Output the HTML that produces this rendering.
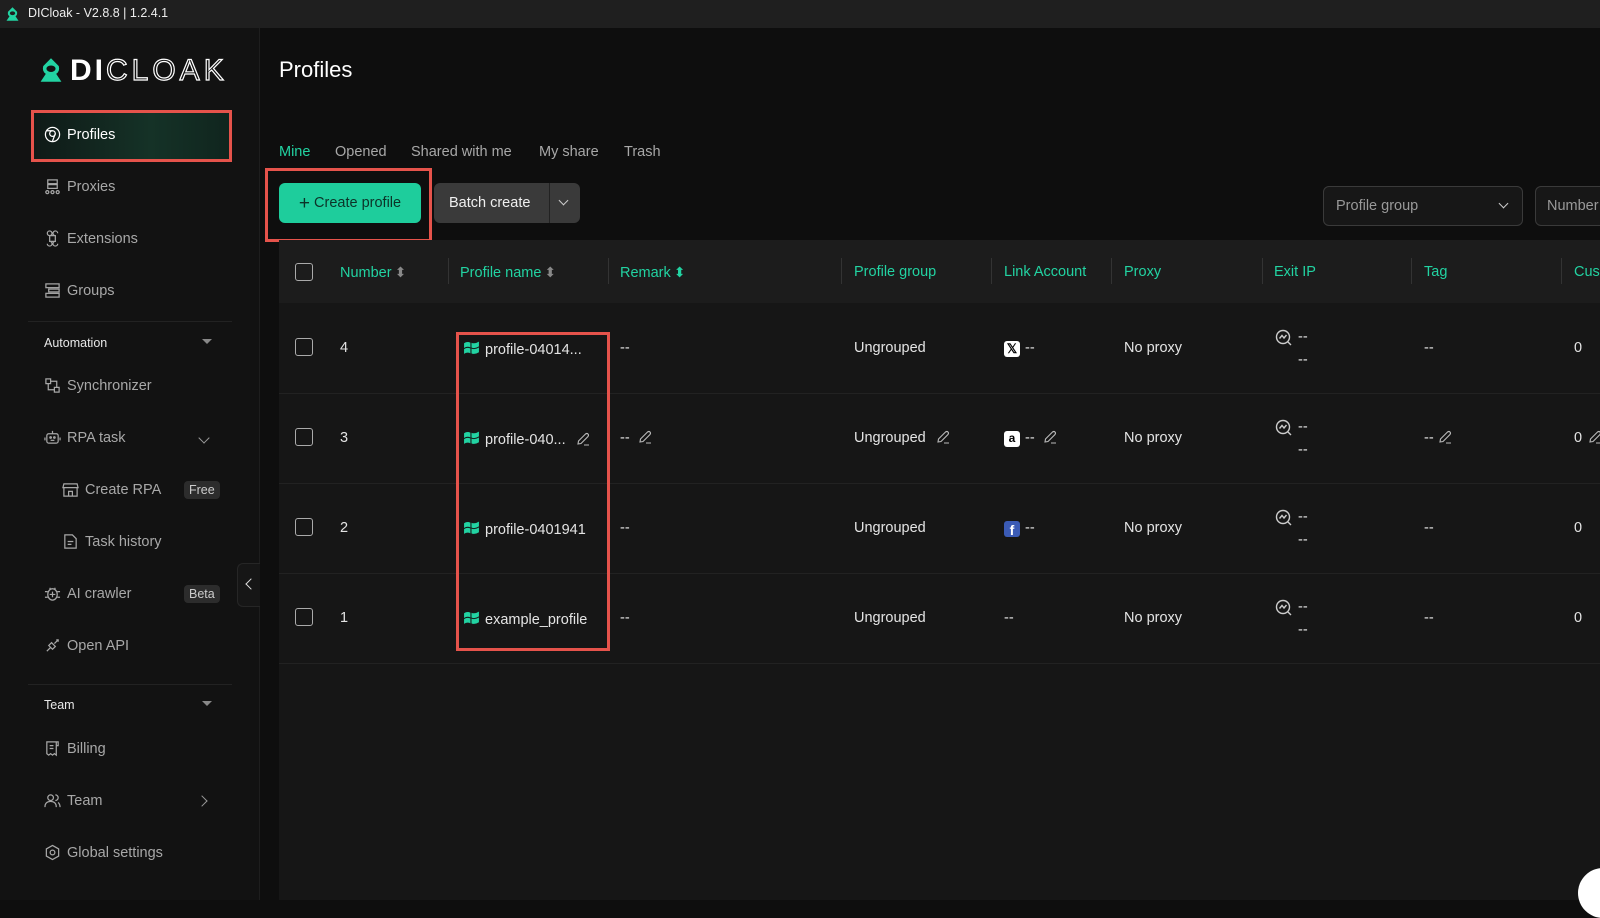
<!DOCTYPE html>
<html><head><meta charset="utf-8"><style>
*{box-sizing:border-box;margin:0;padding:0}
body{width:1600px;height:900px;background:#0e0e0e;font-family:"Liberation Sans",sans-serif;color:#ddd;position:relative;overflow:hidden;font-size:14px}
.a{position:absolute;white-space:nowrap}
.g{color:#22d3a2}
.nav{position:absolute;left:44px;color:#a8a8a8;font-size:14.5px;display:flex;align-items:center;gap:6px;white-space:nowrap}
.nav svg{width:17px;height:17px;stroke:#a8a8a8;fill:none;stroke-width:1.3}
.hd{position:absolute;top:264px;color:#22d3a2;font-size:14.5px;white-space:nowrap}
.so{color:#888;font-size:14px;margin-left:3px}
.dv{position:absolute;top:258px;width:1px;height:26px;background:#333}
.cb{position:absolute;left:295px;width:18px;height:18px;border:1.3px solid #aaa;border-radius:3px}
.rl{position:absolute;left:279px;width:1321px;height:1px;background:#222}
.c{position:absolute;font-size:14.5px;color:#e4e4e4;white-space:nowrap}
.pen{display:inline-block;width:14px;height:14px;vertical-align:-2px;margin-left:10px}
.win{display:inline-block;width:17px;height:16px;vertical-align:-2px;margin-right:5px}
.badge{position:absolute;left:184px;background:#2c2c2c;color:#ccc;font-size:12.5px;padding:2px 5px;border-radius:4px}
</style></head><body>
<div class="a" style="left:0;top:0;width:1600px;height:28px;background:#1f1f1f"></div>
<svg class="a" style="left:5px;top:6px" width="15" height="16" viewBox="0 0 20 20"><path d="M10 1 L16 7 Q17 11 14 13 L18 19 H2 L6 13 Q3 11 4 7 Z" fill="#22d3a2"/><ellipse cx="10" cy="9" rx="3.5" ry="2.5" fill="#1f1f1f"/></svg>
<div class="a" style="left:28px;top:6px;font-size:12.5px;color:#eee">DICloak - V2.8.8 | 1.2.4.1</div>
<div class="a" style="left:0;top:28px;width:260px;height:872px;background:#121212;border-right:1px solid #1e1e1e"></div>
<svg class="a" style="left:38px;top:57px" width="26" height="26" viewBox="0 0 20 20"><path d="M10 1 L16 7 Q17 11 14 13 L18 19 H2 L6 13 Q3 11 4 7 Z" fill="#22d3a2"/><ellipse cx="10" cy="9" rx="3.5" ry="2.5" fill="#121212"/></svg>
<div class="a" style="left:70px;top:54px;font-size:30px;font-weight:bold;color:#fff;letter-spacing:3px">DI<span style="font-weight:normal;-webkit-text-stroke:1.2px #fff;color:transparent;letter-spacing:4px">CLOAK</span></div>
<div class="a" style="left:31px;top:110px;width:201px;height:52px;border:3px solid #e5534b;background:linear-gradient(90deg,#0f1a17,#153227 60%,#10251e)"></div>
<div class="nav" style="top:126px;color:#fff"><svg viewBox="0 0 18 18" style="stroke:#fff"><circle cx="9" cy="9" r="7.5"/><circle cx="9" cy="8" r="3"/><path d="M12 8 L9 16 M3 5 H9"/></svg>Profiles</div>
<div class="nav" style="top:178px"><svg viewBox="0 0 18 18"><rect x="4" y="2" width="10" height="4"/><rect x="4" y="7" width="10" height="4"/><circle cx="3.5" cy="15" r="1.6"/><circle cx="9" cy="15" r="1.6"/><circle cx="14.5" cy="15" r="1.6"/></svg>Proxies</div>
<div class="nav" style="top:230px"><svg viewBox="0 0 18 18"><path d="M6 6 H12 V12 H6 Z M6 6 A2.5 2.5 0 1 0 3.5 3.5 A2.5 2.5 0 0 0 6 6 M12 6 A2.5 2.5 0 1 1 14.5 3.5 M6 12 A2.5 2.5 0 1 1 3.5 14.5 M12 12 A2.5 2.5 0 1 0 14.5 14.5"/></svg>Extensions</div>
<div class="nav" style="top:282px"><svg viewBox="0 0 18 18"><rect x="2" y="2" width="14" height="4"/><rect x="5" y="7.5" width="11" height="3"/><rect x="2" y="12" width="14" height="4"/></svg>Groups</div>
<div class="a" style="left:28px;top:321px;width:204px;height:1px;background:#222"></div>
<div class="a" style="left:44px;top:336px;font-size:12.5px;color:#e8e8e8">Automation</div>
<div class="a" style="left:202px;top:339px;border:5px solid transparent;border-top:5px solid #888"></div>
<div class="nav" style="top:377px"><svg viewBox="0 0 18 18"><rect x="2" y="2" width="5" height="5"/><rect x="11" y="11" width="5" height="5"/><path d="M4.5 7 V13.5 H11 M7 4.5 H13.5 V11"/></svg>Synchronizer</div>
<div class="nav" style="top:429px"><svg viewBox="0 0 18 18"><rect x="3" y="5" width="12" height="10" rx="2"/><path d="M9 2 V5 M1 9 V12 M17 9 V12"/><circle cx="7" cy="9" r=".8"/><circle cx="11" cy="9" r=".8"/><path d="M7 12 H11"/></svg>RPA task</div>
<div class="a" style="left:200px;top:434px;width:8px;height:8px;border-right:1.3px solid #999;border-bottom:1.3px solid #999;transform:rotate(45deg)"></div>
<div class="nav" style="top:481px;left:62px"><svg viewBox="0 0 18 18"><path d="M2 3 H16 L17 7 H1 Z M2 7 V16 H16 V7 M7 16 V11 H11 V16"/></svg>Create RPA</div>
<div class="badge" style="top:481px">Free</div>
<div class="nav" style="top:533px;left:62px"><svg viewBox="0 0 18 18"><path d="M3 2 H11 L15 6 V16 H3 Z M6 9 H12 M6 12 H10"/></svg>Task history</div>
<div class="nav" style="top:585px"><svg viewBox="0 0 18 18"><ellipse cx="9" cy="10" rx="5" ry="6"/><path d="M9 7 V13 M6 10 H12 M1 7 H4 M14 7 H17 M1 13 H4 M14 13 H17 M6 3 L7 4.5 M12 3 L11 4.5"/></svg>AI crawler</div>
<div class="badge" style="top:585px">Beta</div>
<div class="nav" style="top:637px"><svg viewBox="0 0 18 18"><path d="M3 15 L7 11 M5 9 L9 13 L12 10 L8 6 Z M11 7 L15 3 M13 3 H15 V5"/></svg>Open API</div>
<div class="a" style="left:28px;top:684px;width:204px;height:1px;background:#222"></div>
<div class="a" style="left:44px;top:698px;font-size:12.5px;color:#e8e8e8">Team</div>
<div class="a" style="left:202px;top:701px;border:5px solid transparent;border-top:5px solid #888"></div>
<div class="nav" style="top:740px"><svg viewBox="0 0 18 18"><path d="M3 2 H13 V16 L11 14.5 L9 16 L7 14.5 L5 16 L3 14.5 Z M13 2 H15 V6 H13 M6 6 H10 M6 9 H10"/></svg>Billing</div>
<div class="nav" style="top:792px"><svg viewBox="0 0 18 18"><circle cx="7" cy="6" r="3"/><path d="M1 16 Q1 10 7 10 Q13 10 13 16 M12 3 A3 3 0 0 1 12 9 M15 11 Q17 13 17 16"/></svg>Team</div>
<div class="a" style="left:198px;top:797px;width:8px;height:8px;border-right:1.3px solid #999;border-top:1.3px solid #999;transform:rotate(45deg)"></div>
<div class="nav" style="top:844px"><svg viewBox="0 0 18 18"><path d="M9 1.5 L15.5 5.2 V12.8 L9 16.5 L2.5 12.8 V5.2 Z"/><circle cx="9" cy="9" r="2.5"/></svg>Global settings</div>
<div class="a" style="left:237px;top:563px;width:23px;height:44px;background:#161616;border:1px solid #262626;border-right:none;border-radius:6px 0 0 6px"></div>
<div class="a" style="left:247px;top:580px;width:8px;height:8px;border-left:1.6px solid #ddd;border-bottom:1.6px solid #ddd;transform:rotate(45deg)"></div>
<div class="a" style="left:279px;top:57px;font-size:22px;color:#fff">Profiles</div>
<div class="a g" style="left:279px;top:144px;font-size:14.5px">Mine</div>
<div class="a" style="left:335px;top:144px;font-size:14.5px;color:#a8a8a8">Opened</div>
<div class="a" style="left:411px;top:144px;font-size:14.5px;color:#a8a8a8">Shared with me</div>
<div class="a" style="left:539px;top:144px;font-size:14.5px;color:#a8a8a8">My share</div>
<div class="a" style="left:624px;top:144px;font-size:14.5px;color:#a8a8a8">Trash</div>
<div class="a" style="left:265px;top:168px;width:167px;height:74px;border:3px solid #e5534b"></div>
<div class="a" style="left:279px;top:183px;width:142px;height:40px;background:#1ecd9c;border-radius:6px;color:#0c3328;font-size:14.5px;text-align:center;line-height:40px"><span style="font-size:19px;vertical-align:-2px">+</span> Create profile</div>
<div class="a" style="left:434px;top:183px;width:146px;height:40px;background:#3a3a3a;border-radius:6px"></div>
<div class="a" style="left:449px;top:195px;font-size:14.5px;color:#f0f0f0">Batch create</div>
<div class="a" style="left:549px;top:183px;width:1px;height:40px;background:#222"></div>
<div class="a" style="left:560px;top:197px;width:7px;height:7px;border-right:1.3px solid #ccc;border-bottom:1.3px solid #ccc;transform:rotate(45deg)"></div>
<div class="a" style="left:1323px;top:186px;width:200px;height:40px;border:1px solid #3a3a3a;background:#171717;border-radius:6px"></div>
<div class="a" style="left:1336px;top:198px;font-size:14.5px;color:#999">Profile group</div>
<div class="a" style="left:1500px;top:200px;width:7px;height:7px;border-right:1.3px solid #ccc;border-bottom:1.3px solid #ccc;transform:rotate(45deg)"></div>
<div class="a" style="left:1535px;top:186px;width:80px;height:40px;border:1px solid #3a3a3a;background:#171717;border-radius:6px"></div>
<div class="a" style="left:1547px;top:198px;font-size:14.5px;color:#999">Number</div>
<div class="a" style="left:279px;top:240px;width:1321px;height:660px;background:#161616"></div>
<div class="a" style="left:279px;top:240px;width:1321px;height:63px;background:#1c1c1c"></div>
<div class="cb" style="top:263px"></div>
<div class="hd" style="left:340px">Number<span class="so">⬍</span></div>
<div class="dv" style="left:448px"></div>
<div class="hd" style="left:460px">Profile name<span class="so">⬍</span></div>
<div class="dv" style="left:608px"></div>
<div class="hd" style="left:620px">Remark<span class="so" style="color:#22d3a2">⬍</span></div>
<div class="dv" style="left:841px"></div>
<div class="hd" style="left:854px">Profile group</div>
<div class="dv" style="left:991px"></div>
<div class="hd" style="left:1004px">Link Account</div>
<div class="dv" style="left:1111px"></div>
<div class="hd" style="left:1124px">Proxy</div>
<div class="dv" style="left:1262px"></div>
<div class="hd" style="left:1274px">Exit IP</div>
<div class="dv" style="left:1411px"></div>
<div class="hd" style="left:1424px">Tag</div>
<div class="dv" style="left:1561px"></div>
<div class="hd" style="left:1574px">Cus</div>
<div class="rl" style="top:393px"></div><div class="rl" style="top:483px"></div><div class="rl" style="top:573px"></div><div class="rl" style="top:663px"></div>
<div class="cb" style="top:338px"></div><div class="cb" style="top:428px"></div><div class="cb" style="top:518px"></div><div class="cb" style="top:608px"></div>
<div class="c" style="left:340px;top:340px">4</div><div class="c" style="left:340px;top:430px">3</div><div class="c" style="left:340px;top:520px">2</div><div class="c" style="left:340px;top:610px">1</div>
<svg width="0" height="0" style="position:absolute"><defs><symbol id="w" viewBox="0 0 16 15"><path d="M1 3 Q4 1 7 2.5 V7 Q4 5.5 1 7.5 Z M8 2.5 Q11 4 15 1.5 V6 Q11 8.5 8 7 Z M1 8.5 Q4 6.5 7 8 V12.5 Q4 11 1 13 Z M8 8 Q11 9.5 15 7 V11.5 Q11 14 8 12.5 Z" fill="#22d3a2"/></symbol>
<symbol id="p" viewBox="0 0 14 14"><path d="M2 12 L2.5 9 L9.5 2 Q11 1 12 2 Q13 3 12 4.5 L5 11.5 Z M8 13 H13" fill="none" stroke="#bbb" stroke-width="1.1"/></symbol>
<symbol id="s" viewBox="0 0 18 18"><circle cx="8" cy="8" r="6.5" fill="none" stroke="#ccc" stroke-width="1.4"/><path d="M4.5 9.5 L7 6.5 L9 9 L11.5 6 M12.5 12.5 L16 16" fill="none" stroke="#ccc" stroke-width="1.4"/></symbol></defs></svg>
<div class="c" style="left:463px;top:340px"><svg class="win"><use href="#w"/></svg>profile-04014...</div>
<div class="c" style="left:463px;top:430px"><svg class="win"><use href="#w"/></svg>profile-040...<svg class="pen"><use href="#p"/></svg></div>
<div class="c" style="left:463px;top:520px"><svg class="win"><use href="#w"/></svg>profile-0401941</div>
<div class="c" style="left:463px;top:610px"><svg class="win"><use href="#w"/></svg>example_profile</div>
<div class="a" style="left:456px;top:332px;width:154px;height:319px;border:3px solid #e5534b"></div>
<div class="c" style="left:620px;top:340px">--</div>
<div class="c" style="left:620px;top:430px">--<svg class="pen" style="margin-left:8px"><use href="#p"/></svg></div>
<div class="c" style="left:620px;top:520px">--</div>
<div class="c" style="left:620px;top:610px">--</div>
<div class="c" style="left:854px;top:340px">Ungrouped</div>
<div class="c" style="left:854px;top:430px">Ungrouped<svg class="pen"><use href="#p"/></svg></div>
<div class="c" style="left:854px;top:520px">Ungrouped</div>
<div class="c" style="left:854px;top:610px">Ungrouped</div>
<div class="a" style="left:1004px;top:341px;width:16px;height:16px;background:#fff;border-radius:3px;color:#000;font-size:13px;font-weight:bold;text-align:center;line-height:16px">𝕏</div>
<div class="c" style="left:1025px;top:340px">--</div>
<div class="a" style="left:1004px;top:431px;width:16px;height:16px;background:#fff;border-radius:3px;color:#000;font-size:12px;font-weight:bold;text-align:center;line-height:14px">a</div>
<div class="c" style="left:1025px;top:430px">--<svg class="pen" style="margin-left:8px"><use href="#p"/></svg></div>
<div class="a" style="left:1004px;top:521px;width:16px;height:16px;background:#3b5bb5;border-radius:3px;color:#fff;font-size:14px;font-weight:bold;text-align:center;line-height:19px">f</div>
<div class="c" style="left:1025px;top:520px">--</div>
<div class="c" style="left:1004px;top:610px">--</div>
<div class="c" style="left:1124px;top:340px">No proxy</div><div class="c" style="left:1124px;top:430px">No proxy</div><div class="c" style="left:1124px;top:520px">No proxy</div><div class="c" style="left:1124px;top:610px">No proxy</div>
<svg class="a" style="left:1275px;top:329px" width="18" height="18"><use href="#s"/></svg><div class="c" style="left:1298px;top:329px">--</div><div class="c" style="left:1298px;top:352px">--</div>
<svg class="a" style="left:1275px;top:419px" width="18" height="18"><use href="#s"/></svg><div class="c" style="left:1298px;top:419px">--</div><div class="c" style="left:1298px;top:442px">--</div>
<svg class="a" style="left:1275px;top:509px" width="18" height="18"><use href="#s"/></svg><div class="c" style="left:1298px;top:509px">--</div><div class="c" style="left:1298px;top:532px">--</div>
<svg class="a" style="left:1275px;top:599px" width="18" height="18"><use href="#s"/></svg><div class="c" style="left:1298px;top:599px">--</div><div class="c" style="left:1298px;top:622px">--</div>
<div class="c" style="left:1424px;top:340px">--</div>
<div class="c" style="left:1424px;top:430px">--<svg class="pen" style="margin-left:4px"><use href="#p"/></svg></div>
<div class="c" style="left:1424px;top:520px">--</div>
<div class="c" style="left:1424px;top:610px">--</div>
<div class="c" style="left:1574px;top:340px">0</div>
<div class="c" style="left:1574px;top:430px">0<svg class="pen" style="margin-left:6px"><use href="#p"/></svg></div>
<div class="c" style="left:1574px;top:520px">0</div>
<div class="c" style="left:1574px;top:610px">0</div>
<div class="a" style="left:1578px;top:868px;width:50px;height:50px;border-radius:50%;background:#fff"></div>
</body></html>
